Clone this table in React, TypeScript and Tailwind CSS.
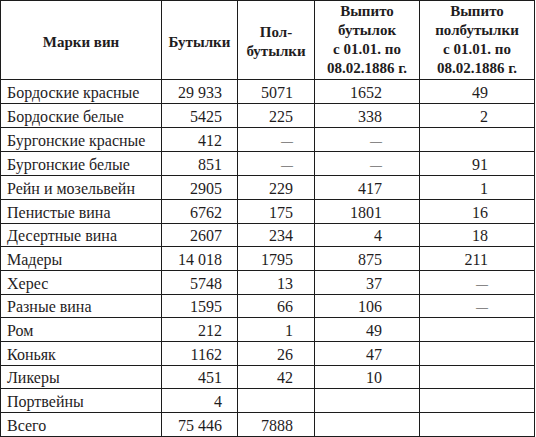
const rows: { name: string; h: string; v: [string, string, string, string] }[] = [
  { name: 'Бордоские красные', h: 'h-[24px]', v: ['29 933', '5071', '1652', '49'] },
  { name: 'Бордоские белые', h: 'h-[24px]', v: ['5425', '225', '338', '2'] },
  { name: 'Бургонские красные', h: 'h-[24px]', v: ['412', '—', '—', ''] },
  { name: 'Бургонские белые', h: 'h-[24px]', v: ['851', '—', '—', '91'] },
  { name: 'Рейн и мозельвейн', h: 'h-[24px]', v: ['2905', '229', '417', '1'] },
  { name: 'Пенистые вина', h: 'h-[24px]', v: ['6762', '175', '1801', '16'] },
  { name: 'Десертные вина', h: 'h-[23px]', v: ['2607', '234', '4', '18'] },
  { name: 'Мадеры', h: 'h-[24px]', v: ['14 018', '1795', '875', '211'] },
  { name: 'Херес', h: 'h-[24px]', v: ['5748', '13', '37', '—'] },
  { name: 'Разные вина', h: 'h-[23px]', v: ['1595', '66', '106', '—'] },
  { name: 'Ром', h: 'h-[24px]', v: ['212', '1', '49', ''] },
  { name: 'Коньяк', h: 'h-[24px]', v: ['1162', '26', '47', ''] },
  { name: 'Ликеры', h: 'h-[23px]', v: ['451', '42', '10', ''] },
  { name: 'Портвейны', h: 'h-[24px]', v: ['4', '', '', ''] },
  { name: 'Всего', h: 'h-[24px]', v: ['75 446', '7888', '', ''] },
]

function Num({ value }: { value: string }) {
  if (value === '—') return <span className="text-[12px]">—</span>
  return <>{value}</>
}

export default function App() {
  return (
    <div
      className="w-[536px] h-[437px] bg-white text-[#1f1d1e] overflow-hidden"
      style={{ fontFamily: '"Liberation Serif", "DejaVu Serif", serif' }}
    >
      <div className="w-[535px] border-l border-t border-[#1c1c1c]">
        {/* header */}
        <div className="flex h-[79px] border-b border-[#1c1c1c] font-bold text-[15px] leading-[19px] text-center">
          <div className="w-[161px] border-r border-[#1c1c1c] flex items-center justify-center pt-[4px]">Марки вин</div>
          <div className="w-[76px] border-r border-[#1c1c1c] flex items-center justify-center pt-[4px]">Бутылки</div>
          <div className="w-[77px] border-r border-[#1c1c1c] flex items-center justify-center pt-[4px]">
            Пол-
            <br />
            бутылки
          </div>
          <div className="w-[105px] border-r border-[#1c1c1c] flex items-center justify-center">
            Выпито
            <br />
            бутылок
            <br />
            с 01.01. по
            <br />
            08.02.1886 г.
          </div>
          <div className="w-[115px] border-r border-[#1c1c1c] flex items-center justify-center">
            Выпито
            <br />
            полбутылки
            <br />
            с 01.01. по
            <br />
            08.02.1886 г.
          </div>
        </div>

        {rows.map((r) => (
          <div key={r.name} className={`flex ${r.h} border-b border-[#1c1c1c] text-[16px] leading-none`}>
            <div className="w-[161px] border-r border-[#1c1c1c] flex items-center pl-[6px] pt-[2px]">{r.name}</div>
            <div className="w-[76px] border-r border-[#1c1c1c] flex items-center justify-end pr-[15px] pt-[2px]">
              <Num value={r.v[0]} />
            </div>
            <div className="w-[77px] border-r border-[#1c1c1c] flex items-center justify-end pr-[21px] pt-[2px]">
              <Num value={r.v[1]} />
            </div>
            <div className="w-[105px] border-r border-[#1c1c1c] flex items-center justify-end pr-[37px] pt-[2px]">
              <Num value={r.v[2]} />
            </div>
            <div className="w-[115px] border-r border-[#1c1c1c] flex items-center justify-end pr-[46px] pt-[2px]">
              <Num value={r.v[3]} />
            </div>
          </div>
        ))}
      </div>
    </div>
  )
}
